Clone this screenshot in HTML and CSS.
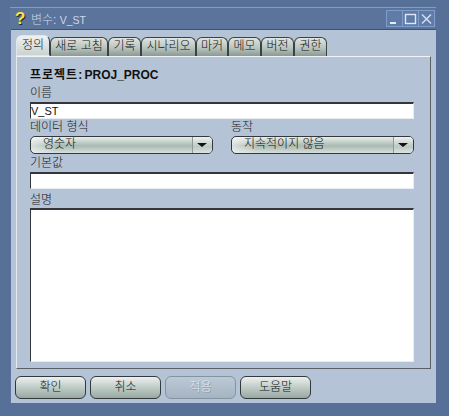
FILE: index.html
```html
<!DOCTYPE html>
<html lang="ko">
<head>
    <meta charset="UTF-8">
    <meta name="viewport" content="width=device-width, initial-scale=1.0">
    <title>변수: V_ST</title>
    <link rel="stylesheet" href="styles.css">
</head>
<body>
    <div class="window">
        <div class="titlebar">
            <span class="help-icon">?</span>
            <span class="title">변수: <span class="title-name">V_ST</span></span>
            <div class="win-buttons">
                <div class="win-btn">
                    <svg width="15" height="14" viewBox="0 0 15 14"><rect x="3" y="10" width="6" height="2" fill="#e4ecf8"/></svg>
                </div>
                <div class="win-btn">
                    <svg width="15" height="14" viewBox="0 0 15 14"><rect x="2.5" y="2.5" width="10" height="9" fill="none" stroke="#dfe8f6" stroke-width="1.4"/></svg>
                </div>
                <div class="win-btn">
                    <svg width="15" height="14" viewBox="0 0 15 14"><path d="M3 2.5 L12 11.5 M12 2.5 L3 11.5" stroke="#cfdcf0" stroke-width="1.6"/></svg>
                </div>
            </div>
        </div>

        <div class="pane">
            <div class="tabs">
                <div class="tab active">정의</div>
                <div class="tab">새로 고침</div>
                <div class="tab">기록</div>
                <div class="tab">시나리오</div>
                <div class="tab">마커</div>
                <div class="tab">메모</div>
                <div class="tab">버전</div>
                <div class="tab">권한</div>
            </div>

            <div class="panel">
                <div class="project"><span class="project-label">프로젝트:</span> PROJ_PROC</div>

                <label class="field-label">이름</label>
                <div class="text-input">V_ST</div>

                <div class="select-row">
                    <div class="select-col">
                        <label class="field-label">데이터 형식</label>
                        <div class="select">
                            <span class="select-value">영숫자</span>
                            <span class="select-arrow"></span>
                        </div>
                    </div>
                    <div class="select-col">
                        <label class="field-label">동작</label>
                        <div class="select">
                            <span class="select-value">지속적이지 않음</span>
                            <span class="select-arrow"></span>
                        </div>
                    </div>
                </div>

                <label class="field-label">기본값</label>
                <div class="text-input"></div>

                <label class="field-label tall">설명</label>
                <div class="text-input textarea"></div>
            </div>

            <div class="buttons">
                <div class="btn">확인</div>
                <div class="btn">취소</div>
                <div class="btn disabled">적용</div>
                <div class="btn">도움말</div>
            </div>
        </div>
    </div>
</body>
</html>
```

FILE: styles.css
```css
* {
    margin: 0;
    padding: 0;
    box-sizing: border-box;
}

html, body {
    height: 100%;
    overflow: hidden;
}

body {
    font-family: 'Liberation Sans', 'Noto Sans CJK KR', sans-serif;
    font-size: 12px;
    font-weight: 300;
    color: #111;
    background: #567098;
    padding: 7px 13px 0 10px;
}

.window {
    width: 426px;
    border-top: 1px solid #7f9ccd;
    background: #5b749c;
}

.titlebar {
    height: 21px;
    display: flex;
    align-items: center;
    padding-left: 5px;
}

.help-icon {
    width: 12px;
    font-size: 17px;
    font-weight: bold;
    color: #f4e84a;
    text-shadow: 1px 1px 0 #222;
    margin-right: 4px;
}

.title {
    color: #cbd8e9;
    font-size: 12px;
}

.title-name {
    font-size: 10.5px;
}

.win-buttons {
    margin-left: auto;
    margin-right: 1px;
    display: flex;
}

.win-btn {
    width: 17px;
    height: 17px;
    border: 1px solid #7f9ccd;
    margin-left: -1px;
    background: #5f7ba6;
    display: flex;
    align-items: center;
    justify-content: center;
}

.pane {
    height: 374px;
    margin-left: 1px;
    background: #b4c3d5;
    border-top: 1px solid #1f5aa0;
    padding: 5px 5px 0 5px;
}

.tabs {
    height: 21px;
    display: grid;
    grid-template-columns: 34px 58px 33px 55px 32px 33px 33px 33px;
    align-items: end;
}

.tab {
    height: 19px;
    border: 1px solid #3a4244;
    border-bottom: none;
    border-radius: 6px 6px 0 0;
    background: linear-gradient(#dfe4e1, #b9c4bf 55%, #8b9a94);
    text-align: center;
    line-height: 17px;
    font-size: 12px;
    white-space: nowrap;
}

.tab.active {
    height: 21px;
    background: linear-gradient(#eef1f0, #c9d3d2);
    border-bottom: 1px solid #b4c3d5;
    border-color: #dfe6ec;
    border-right-color: #3a4244;
    line-height: 19px;
}

.panel {
    height: 313px;
    width: 415px;
    border-top: 1px solid #f2f5f8;
    border-left: 1px solid #e4eaf0;
    border-right: 1px solid #5a5f66;
    border-bottom: 1px solid #5a5f66;
    padding: 10px 16px 0 13px;
}

.project {
    font-size: 12px;
    font-weight: bold;
    height: 18px;
    line-height: 17px;
    white-space: nowrap;
}

.project-label {
    letter-spacing: 1px;
    margin-right: -2px;
}

.field-label {
    display: block;
    height: 17px;
    line-height: 17px;
    font-size: 12px;
    color: #1a1a1a;
}

.field-label.tall {
    height: 19px;
    padding-top: 3px;
    line-height: 16px;
}

.text-input {
    height: 17px;
    background: #fff;
    border-top: 2px solid #33363b;
    border-left: 1px solid #33363b;
    border-right: 1px solid #e8edf2;
    border-bottom: 1px solid #e8edf2;
    line-height: 15px;
    font-size: 11px;
}

.textarea {
    height: 154px;
}

.select-row {
    display: flex;
    justify-content: space-between;
}

.select-col {
    width: 183px;
}

.select {
    height: 18px;
    margin-bottom: 1px;
    display: flex;
    border: 1px solid #33383c;
    border-radius: 5px;
    background: linear-gradient(90deg, rgba(255, 255, 255, 0.55), rgba(255, 255, 255, 0) 14%),
        linear-gradient(#e9eeeb, #a9bab2 55%, #d6dedb);
}

.select-value {
    flex: 1;
    padding-left: 12px;
    line-height: 15px;
}

.select-arrow {
    width: 20px;
    border-left: 1px solid #8d9a96;
    position: relative;
    border-radius: 0 4px 4px 0;
    background: linear-gradient(#eef1ef, #bcc8c3 60%, #dde3e0);
}

.select-arrow::after {
    content: "";
    position: absolute;
    left: 4px;
    top: 6px;
    border-left: 5px solid transparent;
    border-right: 5px solid transparent;
    border-top: 4px solid #111;
}

.buttons {
    display: flex;
    gap: 4px;
    padding-top: 7px;
    margin-left: -1px;
}

.btn {
    width: 71px;
    height: 23px;
    border: 1px solid #33383c;
    border-radius: 6px;
    background: linear-gradient(#edf0ee, #c3cfca 45%, #98a9a2);
    text-align: center;
    line-height: 20px;
    font-size: 12px;
}

.btn.disabled {
    border-color: #8593a0;
    background: linear-gradient(#bcc9d6, #a5b4c2);
    color: #e2e8ee;
    text-shadow: 1px 1px 0 #8a98a6;
}
```
